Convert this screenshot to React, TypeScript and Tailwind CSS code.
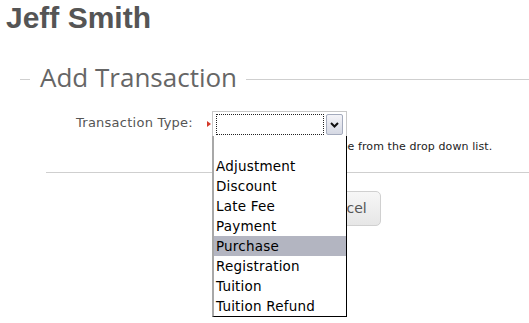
import { FC } from "react";

const options = [
  "",
  "Adjustment",
  "Discount",
  "Late Fee",
  "Payment",
  "Purchase",
  "Registration",
  "Tuition",
  "Tuition Refund",
];

const App: FC = () => {
  return (
    <div className="relative w-[529px] h-[323px] overflow-hidden bg-white font-['DejaVu_Sans',sans-serif]">
      {/* Page title */}
      <h1 className="pl-[6px] text-[30px] leading-[36px] font-bold text-[#555] font-['Liberation_Sans',Arial,sans-serif]">
        Jeff Smith
      </h1>

      {/* Legend row */}
      <div className="mt-[23px] pl-[20px] flex items-start h-[36px]">
        <div className="mt-[20px] w-[10px] border-t border-[#cfcfcf]" />
        <div className="ml-[10px] text-[26px] leading-[36px] text-[#666] font-['Open_Sans',sans-serif]">
          Add Transaction
        </div>
        <div className="mt-[20px] ml-[9px] flex-1 border-t border-[#cfcfcf]" />
      </div>

      {/* Transaction type field */}
      <div className="mt-[16px] flex items-center h-[27px]">
        <label className="ml-[62px] w-[131px] text-right text-[13px] leading-[16px] tracking-[0.25px] text-[#555] -translate-y-[2px]">
          Transaction Type:
        </label>
        <span className="ml-[14px] w-0 h-0 border-y-[3px] border-y-transparent border-l-[4px] border-l-[#d43a2a] -translate-y-[1px]" />
        <div className="ml-[1px] w-[135px] h-[27px] border border-[#c8c8c8] bg-white flex items-center px-[3px]">
          <div className="flex-1 h-[21px] border border-dotted border-[#222]" />
          <div className="ml-[2px] w-[17px] h-[21px] rounded-[2px] border border-[#a4abbd] bg-[linear-gradient(180deg,#f4f4f8,#d5d8e3)] flex items-center justify-center">
            <svg width="9" height="6" viewBox="0 0 9 6">
              <path d="M1 1 L4.5 4.5 L8 1" fill="none" stroke="#111" strokeWidth="2" />
            </svg>
          </div>
        </div>
      </div>

      {/* Help text */}
      <p className="mt-[2px] pl-[214px] text-[11px] leading-[14px] tracking-[0.1px] text-[#222] whitespace-nowrap">
        Select a transaction type from the drop down list.
      </p>

      <div className="mt-[18px] ml-[46px] border-t border-[#cfcfcf]" />

      {/* Buttons */}
      <div className="mt-[18px] pl-[223px] flex gap-[8px]">
        <button className="w-[74px] h-[35px] rounded-[5px] border border-[#c8c8c8] bg-[linear-gradient(180deg,#fafafa,#e4e4e4)] text-[14px] text-[#555]">
          Save
        </button>
        <button className="w-[76px] h-[35px] rounded-[5px] border border-[#d0d0d0] bg-[linear-gradient(180deg,#f7f7f7,#e6e6e6)] text-[14px] text-[#555]">
          Cancel
        </button>
      </div>

      {/* Open dropdown list */}
      <ul className="absolute left-[212px] top-[136px] w-[135px] bg-white border-l-2 border-l-[#a8a8a8] border-r border-r-black border-b border-b-black">
        {options.map((o) => (
          <li
            key={o || "blank"}
            className={
              o === "Purchase"
                ? "h-[20px] pl-[2px] text-[13.5px] leading-[20px] tracking-[0.2px] text-black bg-[#b3b5c1]"
                : "h-[20px] pl-[2px] text-[13.5px] leading-[20px] tracking-[0.2px] text-black"
            }
          >
            {o}
          </li>
        ))}
      </ul>
    </div>
  );
};

export default App;
